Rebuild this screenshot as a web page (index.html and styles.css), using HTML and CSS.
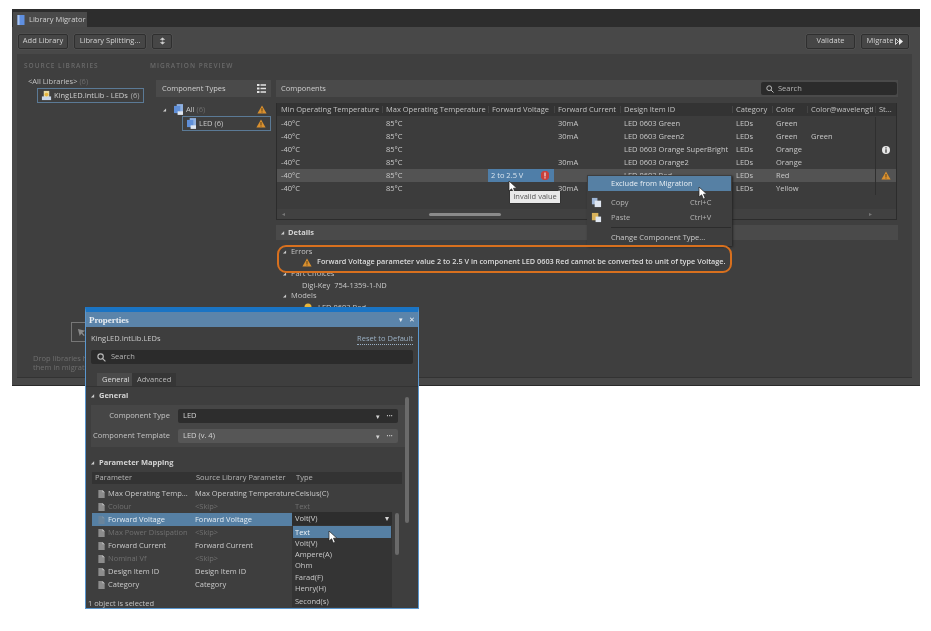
FILE: index.html
```html
<!DOCTYPE html>
<html lang="en">
<head>
<meta charset="utf-8">
<title>Library Migrator</title>
<link rel="stylesheet" href="styles.css">
</head>
<body>
<svg class="defs" width="0" height="0" aria-hidden="true">
  <defs>
    <symbol id="warn" viewBox="0 0 12 11"><path d="M6 .5 11.6 10.5H.4Z" fill="#d9902f"/><path d="M5.500 3.600h1v4h-1zM5.500 8.200h1v1.100h-1z" fill="#4a3413"/></symbol>
    <symbol id="doc" viewBox="0 0 10 10"><path d="M1.500 .5h4.500l2.500 2.500v6.500h-7Z" fill="#8d8d8d"/><path d="M6 .5l2.500 2.500H6Z" fill="#c2c2c2"/></symbol>
    <symbol id="cube" viewBox="0 0 10 12"><rect x="3" y="0" width="7" height="10" fill="#8fb0e0"/><rect x="0" y="2" width="7" height="8" fill="#5f8fd8"/><rect x="4" y="8" width="6" height="4" fill="#dfe6f0"/></symbol>
    <symbol id="cursor" viewBox="0 0 10 14"><path d="M1 1v10l2.600-2.200L5.400 13l1.800-.8L5.500 8.200h3.400Z" fill="#fff" stroke="#222" stroke-width=".7"/></symbol>
    <symbol id="pages" viewBox="0 0 12 12"><rect x="1" y="1" width="6" height="7" fill="#9fb6d6"/><rect x="4" y="4" width="7" height="7" fill="#dfe6f0"/></symbol>
    <symbol id="clip" viewBox="0 0 12 12"><rect x="1" y="1" width="7" height="8" fill="#d8b25a"/><rect x="5" y="5" width="6" height="6" fill="#dfe6f0"/></symbol>
  </defs>
</svg>

<main class="window">
  <div class="tabstrip">
    <div class="tab">
      <svg class="tab-icon" viewBox="0 0 8 10"><rect width="7" height="10" x=".5" fill="#5f8fe0"/><rect width="2" height="10" x=".5" fill="#a9c4ee"/></svg>
      <span>Library Migrator</span>
    </div>
  </div>
  <div class="toolbar">
    <button class="btn btn-add">Add Library</button>
    <button class="btn btn-split">Library Splitting...</button>
    <button class="btn btn-swap" aria-label="Swap"><svg width="7" height="8" viewBox="0 0 9 10"><path d="M1 3.500 4.500 .5 8 3.500H5.500v1h-2v-1ZM1 6.500 4.500 9.500 8 6.500H5.500v-1h-2v1Z" fill="#d0d0d0"/></svg></button>
    <span class="spacer"></span>
    <button class="btn btn-validate">Validate</button>
    <button class="btn btn-migrate">Migrate <svg width="8" height="7" viewBox="0 0 8 7"><path d="M.5.5 3.500 3.500.5 6.500Z" fill="none" stroke="#eee" stroke-width=".8"/><path d="M4 0 8 3.500 4 7Z" fill="#eee"/></svg></button>
  </div>

  <div class="panel">
    <section class="source">
      <h2 class="caps">SOURCE LIBRARIES</h2>
      <div class="all-libs">&lt;All Libraries&gt; <em>(6)</em></div>
      <div class="lib-item">
        <svg class="lib-icon" viewBox="0 0 12 12"><path d="M3 1h6v7H3Z" fill="#e8d9a0"/><path d="M1 7h10v4H1Z" fill="#c9d6e8"/><circle cx="6" cy="5" r="2" fill="#e6b53c"/></svg>
        <span>KingLED.IntLib - LEDs</span> <em class="count">(6)</em>
      </div>
      <div class="drop">
        <div class="drop-box"><svg width="9" height="9" viewBox="0 0 10 10"><path d="M1 1 9 3 6 5 8.500 8 7.500 9 4.800 6 3 9Z" fill="#8a8a8a"/></svg></div>
        <p class="drop-text">Drop libraries here to see<br>them in migration preview</p>
      </div>
    </section>

    <section class="preview">
      <h2 class="caps caps-preview">MIGRATION PREVIEW</h2>
      <div class="preview-cols">
        <div class="types">
          <div class="head types-head">
            <span>Component Types</span>
            <svg width="9" height="9" viewBox="0 0 9 9"><path d="M0 0h2.500v2H0ZM0 3.500h2.500v2H0ZM0 7h2.500v2H0Z" fill="#e4e4e4"/><path d="M3.500 .3H9v1.400H3.500ZM3.500 3.800H9v1.400H3.500ZM3.500 7.300H9v1.400H3.500Z" fill="#e4e4e4"/></svg>
          </div>
          <div class="tree-row">
            <span class="tri tri-all">◢</span>
            <svg class="cube" viewBox="0 0 10 12"><use href="#cube"/></svg>
            <span class="tree-label">All <em>(6)</em></span>
            <svg class="warn"><use href="#warn"/></svg>
          </div>
          <div class="tree-row tree-row-led">
            <svg class="cube" viewBox="0 0 10 12"><use href="#cube"/></svg>
            <span class="tree-label">LED <em class="bright">(6)</em></span>
            <svg class="warn"><use href="#warn"/></svg>
          </div>
        </div>

        <div class="components">
          <div class="head comp-head">
            <span>Components</span>
            <div class="search search-comp">
              <svg width="8" height="8" viewBox="0 0 8 8"><circle cx="3.200" cy="3.200" r="2.400" fill="none" stroke="#bbb"/><path d="M5 5 7.500 7.500" stroke="#bbb"/></svg>
              <span>Search</span>
            </div>
          </div>

          <div class="table">
            <div class="row row-h">
              <span>Min Operating Temperature</span><span>Max Operating Temperature</span><span>Forward Voltage</span><span>Forward Current</span><span>Design Item ID</span><span>Category</span><span>Color</span><span>Color@wavelengtl</span><span>St...</span>
            </div>
            <div class="row"><span>-40°C</span><span>85°C</span><span></span><span>30mA</span><span>LED 0603 Green</span><span>LEDs</span><span>Green</span><span></span><span class="st"></span></div>
            <div class="row"><span>-40°C</span><span>85°C</span><span></span><span>30mA</span><span>LED 0603 Green2</span><span>LEDs</span><span>Green</span><span>Green</span><span class="st"></span></div>
            <div class="row"><span>-40°C</span><span>85°C</span><span></span><span></span><span>LED 0603 Orange SuperBright</span><span>LEDs</span><span>Orange</span><span></span><span class="st"><svg width="8" height="8" viewBox="0 0 8 8"><circle cx="4" cy="4" r="4" fill="#e8e8e8"/><path d="M3.400 1.200h1.200v1.200H3.400ZM3.400 3.200h1.200v3.600H3.400Z" fill="#333"/></svg></span></div>
            <div class="row"><span>-40°C</span><span>85°C</span><span></span><span>30mA</span><span>LED 0603 Orange2</span><span>LEDs</span><span>Orange</span><span></span><span class="st"></span></div>
            <div class="row row-sel"><span>-40°C</span><span>85°C</span><span class="cell-err">2 to 2.5 V<svg width="8" height="9" viewBox="0 0 8 9"><path d="M2 0h4l2 2v5L6 9H2L0 7V2Z" fill="#c9413c"/><path d="M3.500 1.500h1v4h-1ZM3.500 6.200h1v1.200h-1Z" fill="#fff"/></svg></span><span></span><span>LED 0603 Red</span><span>LEDs</span><span>Red</span><span></span><span class="st"><svg class="warn"><use href="#warn"/></svg></span></div>
            <div class="row"><span>-40°C</span><span>85°C</span><span></span><span>30mA</span><span>LED 0603 Yellow</span><span>LEDs</span><span>Yellow</span><span></span><span class="st"></span></div>
            <div class="hscroll">
              <span class="arrow">◂</span>
              <div class="track"><div class="thumb"></div></div>
              <span class="arrow">▸</span>
            </div>
          </div>

          <div class="head details-head"><span class="tri">◢</span> Details</div>
          <div class="details">
            <div class="d-sec"><span class="tri">◢</span> Errors</div>
            <div class="d-err"><svg class="warn"><use href="#warn"/></svg>Forward Voltage parameter value 2 to 2.5 V in component LED 0603 Red cannot be converted to unit of type Voltage.</div>
            <div class="d-sec d-part"><span class="tri">◢</span> Part Choices</div>
            <div class="d-item">Digi-Key&nbsp; 754-1359-1-ND</div>
            <div class="d-sec"><span class="tri">◢</span> Models</div>
            <div class="d-model"><svg width="12" height="10" viewBox="0 0 12 10"><circle cx="6" cy="4" r="3.500" fill="#e6b53c"/><rect x="1" y="7" width="10" height="3" fill="#c9d6e8"/></svg>LED 0603 Red</div>
          </div>
        </div>
      </div>
    </section>
  </div>
</main>

<svg class="cur cur-cell"><use href="#cursor"/></svg>
<div class="tooltip">Invalid value</div>

<div class="menu">
  <div class="m-row m-active">Exclude from Migration</div>
  <div class="m-row m-copy"><svg class="m-icon"><use href="#pages"/></svg><span>Copy</span><span class="m-key">Ctrl+C</span></div>
  <div class="m-row m-paste"><svg class="m-icon"><use href="#clip"/></svg><span>Paste</span><span class="m-key">Ctrl+V</span></div>
  <div class="m-sep"></div>
  <div class="m-row">Change Component Type...</div>
</div>
<svg class="cur cur-menu"><use href="#cursor"/></svg>

<div class="orange"></div>

<aside class="props">
  <header class="p-title"><strong>Properties</strong><span class="p-ctl"><span>▾</span><span>✕</span></span></header>
  <div class="p-top">
    <span>KingLED.IntLib.LEDs</span>
    <a class="reset">Reset to Default</a>
  </div>
  <div class="search search-p">
    <svg width="9" height="9" viewBox="0 0 8 8"><circle cx="3.200" cy="3.200" r="2.400" fill="none" stroke="#bbb"/><path d="M5 5 7.500 7.500" stroke="#bbb"/></svg>
    <span>Search</span>
  </div>
  <div class="p-tabs"><span class="p-tab p-tab-on">General</span><span class="p-tab">Advanced</span></div>
  <div class="p-scroll">
    <div class="vbar"></div>
    <h3 class="p-sec"><span class="tri">◢</span> General</h3>
    <div class="p-box">
      <div class="p-field">
        <label>Component Type</label>
        <div class="p-select"><span>LED</span><span class="p-sel-ctl"><span>▾</span><span class="dots">•••</span></span></div>
      </div>
      <div class="p-field">
        <label>Component Template</label>
        <div class="p-select p-select-light"><span>LED (v. 4)</span><span class="p-sel-ctl"><span>▾</span><span class="dots">•••</span></span></div>
      </div>
    </div>
    <h3 class="p-sec p-sec-map"><span class="tri">◢</span> Parameter Mapping</h3>
    <div class="map">
      <div class="mrow mrow-h"><span>Parameter</span><span>Source Library Parameter</span><span>Type</span></div>
      <div class="mrow"><span><svg class="doc"><use href="#doc"/></svg>Max Operating Temp...</span><span>Max Operating Temperature</span><span>Celsius(C)</span></div>
      <div class="mrow m-dim"><span><svg class="doc"><use href="#doc"/></svg>Colour</span><span>&lt;Skip&gt;</span><span>Text</span></div>
      <div class="mrow m-sel"><span><svg class="doc doc-sel"><use href="#doc"/></svg>Forward Voltage</span><span>Forward Voltage</span></div>
      <div class="mrow m-dim"><span><svg class="doc"><use href="#doc"/></svg>Max Power Dissipation</span><span>&lt;Skip&gt;</span><span></span></div>
      <div class="mrow"><span><svg class="doc"><use href="#doc"/></svg>Forward Current</span><span>Forward Current</span><span></span></div>
      <div class="mrow m-dim"><span><svg class="doc"><use href="#doc"/></svg>Nominal Vf</span><span>&lt;Skip&gt;</span><span></span></div>
      <div class="mrow"><span><svg class="doc"><use href="#doc"/></svg>Design Item ID</span><span>Design Item ID</span><span></span></div>
      <div class="mrow"><span><svg class="doc"><use href="#doc"/></svg>Category</span><span>Category</span><span></span></div>
    </div>
    <div class="status">1 object is selected</div>
    <div class="dropdown">
      <div class="dd-top"><span>Volt(V)</span><span class="dd-arrow">▾</span></div>
      <div class="dd-opt dd-on">Text</div>
      <div class="dd-opt">Volt(V)</div>
      <div class="dd-opt">Ampere(A)</div>
      <div class="dd-opt">Ohm</div>
      <div class="dd-opt">Farad(F)</div>
      <div class="dd-opt">Henry(H)</div>
      <div class="dd-opt dd-last">Second(s)</div>
    </div>
    <div class="ibar"></div>
    <svg class="cur cur-dd"><use href="#cursor"/></svg>
  </div>
</aside>
</body>
</html>
```

FILE: styles.css
```css
* { box-sizing: border-box; }
html, body { margin: 0; height: 100%; background: #fff; }
body { position: relative; width: 931px; height: 631px; overflow: hidden; padding: 9px 11px 0 12px; font: 7.5px/1 "Open Sans", "Noto Sans", sans-serif; color: #c9c9c9; filter: blur(.35px); }
.defs { position: absolute; }
em { font-style: normal; color: #6e6e6e; }
em.bright { color: #c9c9c9; }
h2, h3, p { margin: 0; font-weight: normal; }

.window { width: 908px; height: 377px; background: #484848; display: flex; flex-direction: column; border-bottom: 1px solid #2a2a2a; }
.tabstrip { height: 18px; background: #2d2d2d; padding: 3px 0 0 1px; display: flex; }
.tab { width: 74px; height: 15px; background: #4a4a4a; display: flex; align-items: center; gap: 4px; padding-left: 4px; color: #d0d0d0; }
.tab-icon { width: 8px; height: 10px; }

.toolbar { height: 27px; display: flex; align-items: center; padding: 1px 11px 0 6px; gap: 6px; }
.btn { height: 15px; background: #464646; border: 1px solid #2f2f2f; border-radius: 2px; color: #d2d2d2; font: inherit; padding: 0; display: flex; align-items: center; justify-content: center; box-shadow: 0 0 0 .5px #555; }
.btn-add { width: 50px; }
.btn-split { width: 72px; }
.btn-swap { width: 20px; }
.btn-validate { width: 49px; }
.btn-migrate { width: 48px; gap: 2px; }
.spacer { flex: 1; }

.panel { flex: 1; margin: 0 8px 7px 5px; background: #3f3f3f; display: flex; min-height: 0; border-bottom: 1px solid #333; }
.source { width: 133px; padding: 7px 0 0 7px; display: flex; flex-direction: column; }
.caps { font-size: 6.5px; letter-spacing: 1px; color: #6a6a6a; height: 10px; line-height: 10px; font-weight: 600; }
.all-libs { margin: 5px 0 0 4px; color: #c4c4c4; height: 10px; line-height: 10px; }
.lib-item { margin: 2px 0 0 13px; width: 107px; height: 15px; border: 1px solid #5b7a96; display: flex; align-items: center; gap: 2px; padding-left: 3px; color: #cfcfcf; }
.lib-icon { width: 11px; height: 11px; }
.count { color: #b0b0b0; margin-left: 1px; }
.drop { margin-top: auto; padding-bottom: 6px; }
.drop-box { width: 44px; height: 20px; margin: 0 0 12px 47px; border: 1px solid #777; display: flex; align-items: center; padding-left: 5px; }
.drop-text { margin-left: 9px; color: #6e6e6e; line-height: 8.5px; white-space: nowrap; width: 200px; }

.preview { flex: 1; padding-top: 7px; min-width: 0; }
.caps-preview { margin-bottom: 9px; }
.preview-cols { display: flex; gap: 5px; padding-left: 6px; }
.types { width: 115px; }
.head { background: #4a4a4a; display: flex; align-items: center; }
.types-head { height: 17px; padding: 0 5px 0 6px; justify-content: space-between; color: #cfcfcf; margin-bottom: 6px; }
.tree-row { height: 13px; display: flex; align-items: center; padding-left: 7px; }
.tree-row .tree-label { flex: 1; margin-left: 3px; }
.tree-row .warn { margin-right: 4px; }
.tri { display: inline-block; font-size: 4px; color: #ccc; width: 6px; vertical-align: 1px; }
.tri-all { width: 10px; }
.cube { width: 9px; height: 11px; margin-left: 1px; }
.tree-row-led { margin: 0 0 0 26px; height: 15px; border: 1px solid #5b7a96; padding-left: 3px; }
.warn { width: 10px; height: 9px; flex: none; }

.components { width: 622px; }
.comp-head { height: 17px; padding: 0 1px 0 5px; justify-content: space-between; color: #cfcfcf; }
.search { background: #2b2b2b; border-radius: 2px; display: flex; align-items: center; gap: 4px; color: #b5b5b5; }
.search-comp { width: 136px; height: 13px; padding-left: 5px; }

.table { margin-top: 6px; height: 117px; background: #3c3c3c; border: 1px solid #2c2c2c; border-top: 0; display: flex; flex-direction: column; width: 621px; }
.row { display: grid; grid-template-columns: 105px 106px 66px 66px 112px 40px 35px 68px 1fr; height: 13px; align-items: center; }
.row > span { padding-left: 4px; white-space: nowrap; }
.row-h { height: 13px; background: #333; margin-bottom: 1px; color: #c2c2c2; }
.row-h > span { border-left: 1px solid #444; padding-left: 3px; }
.row-h > span:first-child { border-left: 0; padding-left: 4px; }
.row-sel { background: #535353; }
.row > .st { display: flex; align-items: center; justify-content: center; padding: 0; height: 13px; border-left: 1px solid #2f2f2f; }
.row > .cell-err { background: #4f7ea8; color: #d8e4ee; height: 13px; display: flex; align-items: center; justify-content: space-between; padding: 0 5px 0 3px; }
.hscroll { margin-top: auto; height: 10px; display: flex; align-items: center; background: #414141; color: #777; padding: 0 23px 0 5px; gap: 3px; font-size: 6px; }
.track { flex: 1; height: 3px; }
.thumb { margin-left: 140px; width: 72px; height: 3px; background: #8b8b8b; border-radius: 2px; }
.arrow { width: 4px; }

.details-head { margin-top: 5px; height: 15px; padding-left: 5px; font-weight: 700; color: #d4d4d4; gap: 1px; }
.details { padding: 6px 0 0 7px; }
.d-sec { height: 11px; line-height: 11px; color: #c4c4c4; }
.d-err { display: flex; align-items: center; gap: 5px; height: 10px; padding-left: 19px; color: #dcdcdc; font-weight: 600; white-space: nowrap; margin-bottom: 1px; font-size: 7.3px; }
.d-part { margin-top: 1px; }
.d-item { padding-left: 19px; height: 10px; line-height: 10px; margin-top: 1px; }
.d-model { padding-left: 19px; margin-top: 2px; display: flex; align-items: center; gap: 4px; height: 10px; }

.orange { position: absolute; left: 277px; top: 245px; width: 455px; height: 28px; border: 2px solid #d8701e; border-radius: 9px; }
.cur { position: absolute; width: 10px; height: 14px; }
.cur-cell { left: 508px; top: 180px; }
.cur-menu { left: 698px; top: 186px; }
.cur-dd { left: 242px; top: 143px; }
.tooltip { position: absolute; left: 510px; top: 191px; width: 50px; height: 12px; background: #e9e9e9; color: #555; display: flex; align-items: center; justify-content: center; box-shadow: 0 0 1px #111; }

.menu { position: absolute; left: 587px; top: 175px; width: 145px; height: 71px; background: #3e3e3e; box-shadow: 1px 1px 2px #222; padding: 1px; }
.m-row { height: 16px; display: flex; align-items: center; padding-left: 23px; position: relative; color: #c9c9c9; white-space: nowrap; }
.m-active { height: 15px; background: #5680a4; color: #e8eef4; margin-bottom: 3.5px; }
.m-copy, .m-paste { height: 15.5px; color: #b5b5b5; }
.m-key { position: absolute; left: 102px; }
.m-icon { position: absolute; left: 3px; width: 11px; height: 11px; }
.m-sep { height: 1px; background: #2c2c2c; margin: 1px 0 2px 23px; }

.props { position: absolute; left: 85px; top: 307px; width: 334px; height: 302px; background: #3e3e3e; border: 1px solid #5a97cf; border-top: 5px solid #1a74c4; display: flex; flex-direction: column; }
.p-title { height: 15px; background: #5b84aa; padding: 0 3px; display: flex; align-items: center; justify-content: space-between; flex: none; }
.p-title strong { font: 700 9px "Liberation Serif", serif; color: #e8edf2; }
.p-ctl { font-size: 7px; color: #e8edf2; display: flex; gap: 6px; }
.p-top { display: flex; justify-content: space-between; padding: 8px 5px 0 5px; height: 23px; flex: none; }
.reset { color: #9ab0c4; border-bottom: 1px dotted #9ab0c4; height: 10px; }
.search-p { flex: none; margin: 0 5px; height: 14px; padding-left: 6px; gap: 5px; }
.p-tabs { flex: none; display: flex; margin: 9px 0 0 11px; height: 13px; }
.p-tab { padding: 3px 5px 0; background: #363636; color: #bbb; }
.p-tab-on { background: #4a4a4a; color: #ddd; width: 35px; }
.p-scroll { flex: 1; position: relative; border-top: 1px solid #333; min-height: 0; }
.vbar { position: absolute; left: 319px; top: 10px; width: 4px; height: 126px; background: #6a6a6a; border-radius: 2px; }
.p-sec { font-weight: 700; color: #d4d4d4; font-size: 7.5px; height: 10px; margin: 3px 0 0 5px; line-height: 10px; }
.p-box { margin: 5px 13px 0 5px; height: 42px; background: #464646; padding: 4px 7px 0 0; display: flex; flex-direction: column; gap: 6px; }
.p-field { display: flex; align-items: center; height: 14px; }
.p-field label { width: 87px; text-align: right; padding-right: 8px; color: #c4c4c4; white-space: nowrap; flex: none; letter-spacing: .05px; }
.p-select { flex: 1; height: 14px; background: #2d2d2d; border-radius: 2px; display: flex; align-items: center; justify-content: space-between; padding: 0 5px; color: #d4d4d4; }
.p-select-light { background: #565656; }
.p-sel-ctl { display: flex; align-items: center; gap: 6px; font-size: 7px; }
.dots { font-size: 5px; letter-spacing: .3px; }
.p-sec-map { margin-top: 10px; }
.map { margin: 5px 16px 0 6px; }
.mrow { display: grid; grid-template-columns: 101px 100px 1fr; height: 13px; align-items: center; color: #c9c9c9; white-space: nowrap; }
.mrow > span { display: flex; align-items: center; gap: 2px; padding-left: 5px; }
.mrow > span:nth-child(2) { padding-left: 2px; }
.mrow > span:nth-child(3) { padding-left: 2px; }
.mrow-h { height: 12px; background: #333; margin-bottom: 3px; color: #b5b5b5; }
.mrow-h > span:nth-child(n) { padding-left: 3px; }
.m-dim { color: #707070; }
.m-sel { background: #5680a4; color: #e4ebf2; margin-right: 110px; grid-template-columns: 101px 99px; }
.doc { width: 9px; height: 10px; flex: none; }
.doc-sel { opacity: .35; }
.status { position: absolute; left: 2px; bottom: 1px; color: #c4c4c4; }
.dropdown { position: absolute; left: 206px; top: 125px; width: 100px; background: #343434; }
.dd-top { height: 13px; background: #2d2d2d; display: flex; justify-content: space-between; align-items: center; padding: 0 3px; color: #d4d4d4; }
.dd-opt { height: 11.2px; line-height: 11.2px; padding-left: 3px; color: #c9c9c9; }
.dd-on { height: 12px; line-height: 12px; background: #5680a4; color: #eef2f6; margin: 1px 1px 0; padding-left: 2px; }
.dd-last { margin-top: 2px; height: 11px; }
.ibar { position: absolute; left: 309px; top: 126px; width: 4px; height: 42px; background: #6a6a6a; border-radius: 2px; }
```
